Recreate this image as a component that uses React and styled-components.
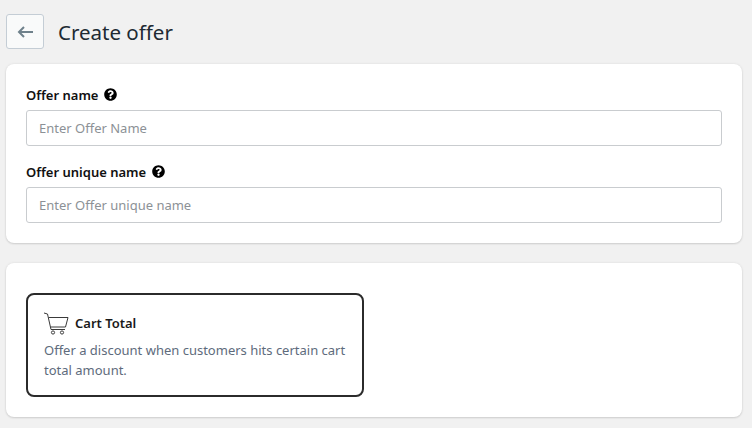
import { createGlobalStyle, styled } from 'styled-components';
import { FaQuestionCircle } from 'react-icons/fa';

const GlobalStyle = createGlobalStyle`
    html, body {
        margin: 0;
        padding: 0;
        background: #f1f1f1;
        overflow: hidden;
    }
    * {
        box-sizing: border-box;
    }
`;

const Page = styled.div`
    width: 752px;
    height: 428px;
    padding: 14px 10px 0 6px;
    display: flex;
    flex-direction: column;
    gap: 20px;
    font-family: 'Noto Sans', 'Open Sans', sans-serif;
    color: #202223;
`;

const Header = styled.div`
    height: 30px;
    display: flex;
    align-items: flex-start;
    gap: 14px;
`;

const BackButton = styled.button`
    width: 38px;
    height: 35px;
    padding: 0;
    display: flex;
    align-items: center;
    justify-content: center;
    background: #f9fafa;
    border: 1px solid #c4cdd5;
    border-radius: 3px;
    color: #6f818b;
`;

const Title = styled.h1`
    margin: 0;
    font-size: 20.5px;
    font-weight: 400;
    line-height: 36px;
    color: #202a33;
`;

const Card = styled.section`
    background: #fff;
    border-radius: 8px;
    box-shadow: 0 0 3px rgba(23, 24, 24, 0.08), 0 1px 2px rgba(0, 0, 0, 0.12);
    height: ${(props) => props.$height}px;
    padding: ${(props) => props.$padding};
`;

const FormCard = styled(Card)`
    display: flex;
    flex-direction: column;
    gap: 17px;
`;

const Field = styled.div`
    display: flex;
    flex-direction: column;
    gap: 5px;
`;

const Label = styled.label`
    height: 19px;
    display: flex;
    align-items: center;
    gap: 6px;
    font-size: 13px;
    font-weight: 600;
    line-height: 19px;
    color: #111;
    svg {
        margin-top: -3px;
    }
`;

const Input = styled.input`
    width: 100%;
    height: 36px;
    padding: 0 12px;
    background: #fff;
    border: 1px solid #c9cccf;
    border-radius: 3px;
    outline: none;
    font-family: inherit;
    font-size: 13px;
    &::placeholder {
        color: #8c9196;
        opacity: 1;
    }
`;

const Tile = styled.div`
    width: 338px;
    height: 104px;
    padding: 15px 16px 0;
    background: #fff;
    border: 2px solid #2b2b2b;
    border-radius: 8px;
`;

const TileHead = styled.div`
    height: 26px;
    display: flex;
    align-items: center;
    gap: 6px;
`;

const TileTitle = styled.h3`
    margin: 0;
    font-size: 13px;
    font-weight: 600;
    color: #1a1a1a;
`;

const TileText = styled.p`
    margin: 4px 0 0;
    font-size: 13px;
    line-height: 20px;
    color: #5e6b7c;
`;

function CartIcon() {
    return (
        <svg width="25" height="23" viewBox="0 0 25 23" fill="none" stroke="#3a3a3a" strokeWidth="1">
            <path d="M0 1 L3.5 2 L7 17.5 H21" />
            <path d="M4.5 5.5 H24 L21.5 15 H6.5" />
            <circle cx="9" cy="20.5" r="1.6" />
            <circle cx="18" cy="20.5" r="1.6" />
        </svg>
    );
}

export default function App() {
    return (
        <>
            <GlobalStyle />
            <Page>
                <Header>
                    <BackButton aria-label="Back">
                        <svg width="16" height="12" viewBox="0 0 16 12" fill="none" stroke="currentColor" strokeWidth="2">
                            <path d="M16 6 H2 M7 1 L2 6 L7 11" />
                        </svg>
                    </BackButton>
                    <Title>Create offer</Title>
                </Header>
                <FormCard $height={179} $padding="22px 20px 0">
                    <Field>
                        <Label>
                            Offer name <FaQuestionCircle size={13} color="#000" />
                        </Label>
                        <Input placeholder="Enter Offer Name" />
                    </Field>
                    <Field>
                        <Label>
                            Offer unique name <FaQuestionCircle size={13} color="#000" />
                        </Label>
                        <Input placeholder="Enter Offer unique name" />
                    </Field>
                </FormCard>
                <Card $height={154} $padding="30px 20px 0">
                    <Tile>
                        <TileHead>
                            <CartIcon />
                            <TileTitle>Cart Total</TileTitle>
                        </TileHead>
                        <TileText>
                            Offer a discount when customers hits certain cart total amount.
                        </TileText>
                    </Tile>
                </Card>
            </Page>
        </>
    );
}
